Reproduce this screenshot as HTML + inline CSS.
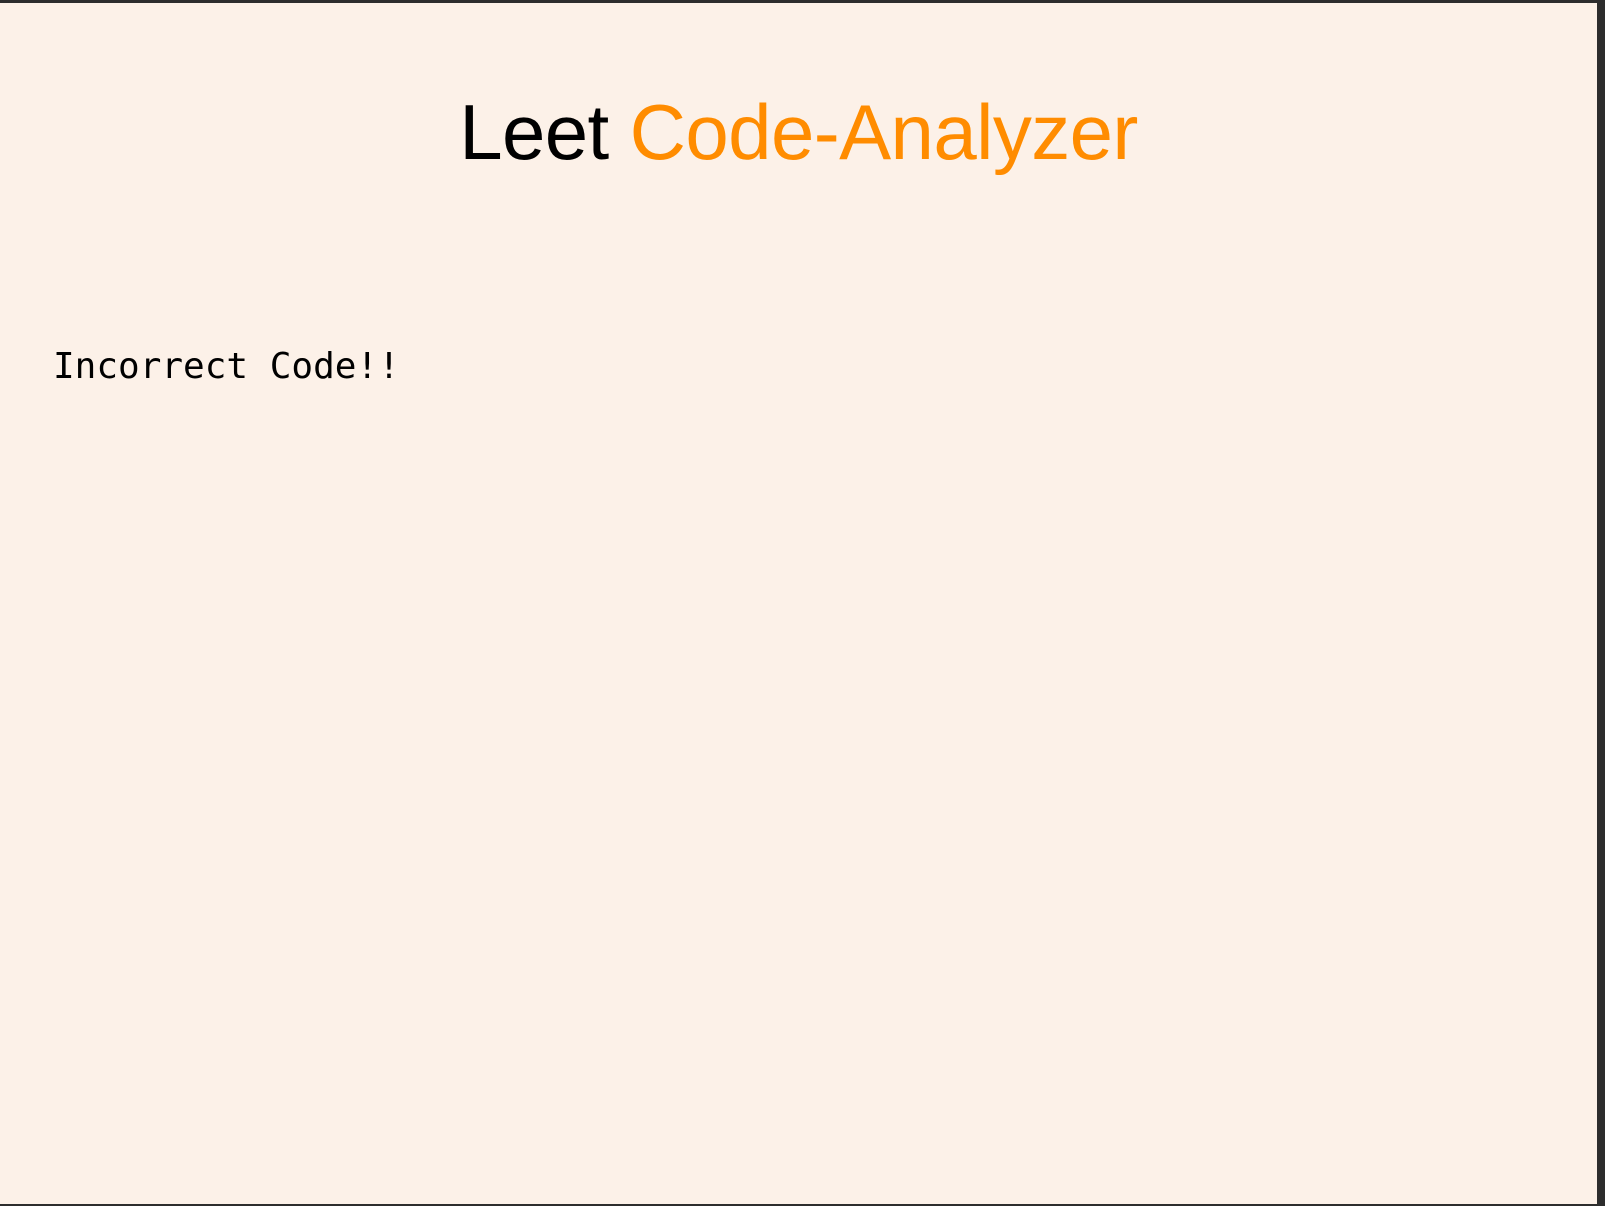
<!DOCTYPE html>
<html><head><meta charset="utf-8"><style>
html,body{margin:0;padding:0;width:1605px;height:1206px;overflow:hidden;background:#2d2d2d;}
.page{position:absolute;left:0;top:3px;width:1597px;height:1201px;background:#fcf1e8;}
h1{position:absolute;left:0;width:1597px;top:90px;margin:0;text-align:center;font:400 78px/1 "Liberation Sans",Arial,sans-serif;color:#000;letter-spacing:-0.6px;}
h1 span{color:#ff8c00;}
.msg{position:absolute;left:53px;top:346px;margin:0;font:400 36px/1 "DejaVu Sans Mono","Liberation Mono",monospace;color:#000;}
</style></head><body>
<div class="page">
<h1>Leet <span>Code-Analyzer</span></h1>
<div class="msg">Incorrect Code!!</div>
</div>
</body></html>
